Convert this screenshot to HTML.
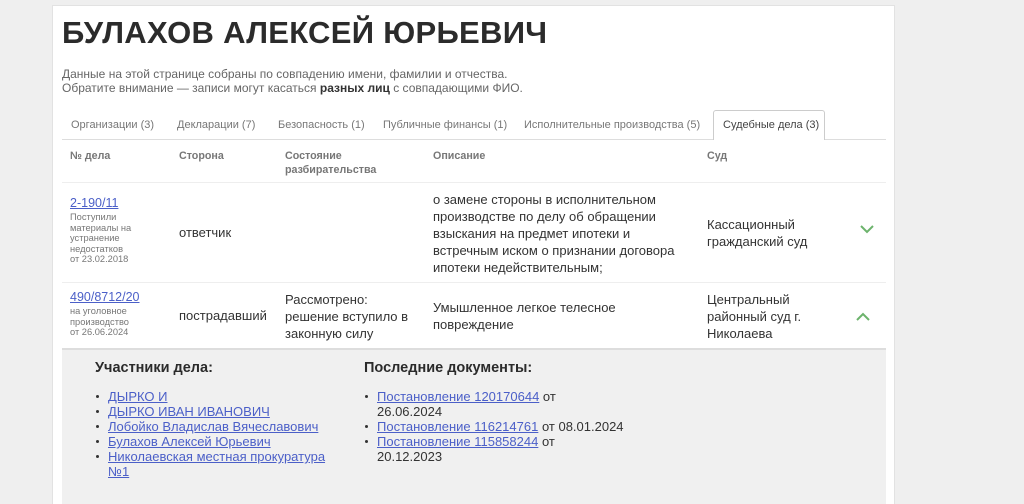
<!DOCTYPE html>
<html><head><meta charset="utf-8"><style>
*{margin:0;padding:0;box-sizing:border-box}
html,body{width:1024px;height:504px;overflow:hidden}
body{background:#efefef;font-family:"Liberation Sans",sans-serif;color:#333;position:relative}
.card{position:absolute;left:52px;top:5px;width:843px;height:499px;background:#fff;border:1px solid #e2e2e2;border-bottom:none}
.a{position:absolute;white-space:nowrap}
h1{position:absolute;left:62px;top:15px;font-size:31px;font-weight:bold;color:#2b2b2b;letter-spacing:0.3px}
.p{font-size:12px;color:#666;line-height:14px}
.tab{font-size:11px;color:#777;top:119px}
.th{font-size:10.7px;font-weight:bold;color:#777;top:149px;line-height:14px}
.t{font-size:13px;color:#333;line-height:17px}
a{color:#4b5fc8;text-decoration:underline}
.s{font-size:9.3px;color:#777;line-height:10.5px}
.line{position:absolute;height:1px;background:#eee}
ul{list-style:none}
li{position:relative;padding-left:13px;font-size:13px;line-height:15px;color:#333}
li:before{content:"";position:absolute;left:1px;top:6px;width:3px;height:3px;border-radius:50%;background:#333}
</style></head><body>
<div class="card"></div>
<h1>БУЛАХОВ АЛЕКСЕЙ ЮРЬЕВИЧ</h1>
<div class="a p" style="left:62px;top:67px">Данные на этой странице собраны по совпадению имени, фамилии и отчества.<br>Обратите внимание — записи могут касаться <b style="color:#333">разных лиц</b> с совпадающими ФИО.</div>
<div class="a tab" style="left:71px">Организации (3)</div>
<div class="a tab" style="left:177px">Декларации (7)</div>
<div class="a tab" style="left:278px">Безопасность (1)</div>
<div class="a tab" style="left:383px">Публичные финансы (1)</div>
<div class="a tab" style="left:524px">Исполнительные производства (5)</div>
<div style="position:absolute;left:62px;top:139px;width:824px;height:1px;background:#ddd"></div>
<div style="position:absolute;left:713px;top:110px;width:112px;height:30px;background:#fff;border:1px solid #ccc;border-bottom:none;border-radius:3px 3px 0 0"></div>
<div class="a tab" style="left:723px;color:#444">Судебные дела (3)</div>
<div class="a th" style="left:70px">№ дела</div>
<div class="a th" style="left:179px">Сторона</div>
<div class="a th" style="left:285px">Состояние<br>разбирательства</div>
<div class="a th" style="left:433px">Описание</div>
<div class="a th" style="left:707px">Суд</div>
<div class="line" style="left:62px;top:182px;width:824px"></div>
<div class="a" style="left:70px;top:196px;font-size:12.5px"><a>2-190/11</a></div>
<div class="a s" style="left:70px;top:212px">Поступили<br>материалы на<br>устранение<br>недостатков<br>от 23.02.2018</div>
<div class="a t" style="left:179px;top:224px">ответчик</div>
<div class="a t" style="left:433px;top:191px">о замене стороны в исполнительном<br>производстве по делу об обращении<br>взыскания на предмет ипотеки и<br>встречным иском о признании договора<br>ипотеки недействительным;</div>
<div class="a t" style="left:707px;top:216px">Кассационный<br>гражданский суд</div>
<svg class="a" style="left:860px;top:224px" width="14" height="10"><path d="M1 2 L7 8 L13 2" fill="none" stroke="#6cb36c" stroke-width="2"/></svg>
<div class="line" style="left:62px;top:282px;width:824px"></div>
<div class="a" style="left:70px;top:290px;font-size:12.5px"><a>490/8712/20</a></div>
<div class="a s" style="left:70px;top:306px">на уголовное<br>производство<br>от 26.06.2024</div>
<div class="a t" style="left:179px;top:307px">пострадавший</div>
<div class="a t" style="left:285px;top:291px">Рассмотрено:<br>решение вступило в<br>законную силу</div>
<div class="a t" style="left:433px;top:299px">Умышленное легкое телесное<br>повреждение</div>
<div class="a t" style="left:707px;top:291px">Центральный<br>районный суд г.<br>Николаева</div>
<svg class="a" style="left:856px;top:312px" width="14" height="10"><path d="M1 8 L7 2 L13 8" fill="none" stroke="#6cb36c" stroke-width="2"/></svg>
<div style="position:absolute;left:62px;top:348px;width:824px;height:160px;background:#f0f0f0;border-top:2px solid #ddd"></div>
<div class="a" style="left:95px;top:360px;font-size:14.5px;font-weight:bold;color:#2b2b2b">Участники дела:</div>
<ul class="a" style="left:95px;top:389px">
<li><a>ДЫРКО И</a></li>
<li><a>ДЫРКО ИВАН ИВАНОВИЧ</a></li>
<li><a>Лобойко Владислав Вячеславович</a></li>
<li><a>Булахов Алексей Юрьевич</a></li>
<li><a>Николаевская местная прокуратура</a><br><a>№1</a></li>
</ul>
<div class="a" style="left:364px;top:360px;font-size:14.5px;font-weight:bold;color:#2b2b2b">Последние документы:</div>
<ul class="a" style="left:364px;top:389px">
<li><a>Постановление 120170644</a> от<br>26.06.2024</li>
<li><a>Постановление 116214761</a> от 08.01.2024</li>
<li><a>Постановление 115858244</a> от<br>20.12.2023</li>
</ul>
</body></html>
